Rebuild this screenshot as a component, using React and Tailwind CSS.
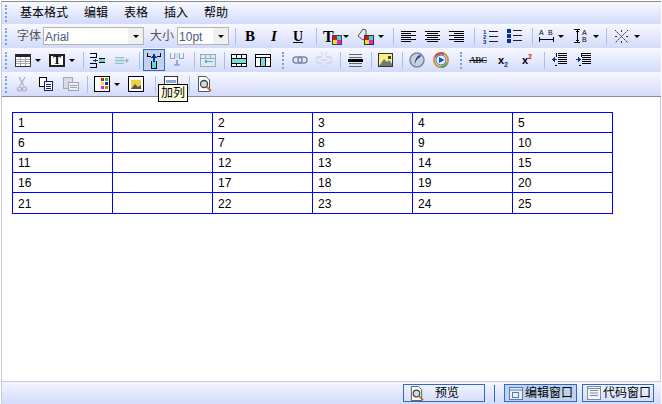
const cjk = "font-['Liberation_Sans','Noto_Sans_CJK_SC',sans-serif]";

const Svg = ({ w = 16, h = 16, children, className = "" }) => (
  <svg width={w} height={h} viewBox={`0 0 ${w} ${h}`} className={className} shapeRendering="crispEdges">
    {children}
  </svg>
);

const Arrow = () => (
  <div className="flex w-[10px] justify-center">
    <div className="h-0 w-0 border-x-[3px] border-t-[3px] border-x-transparent border-t-black" />
  </div>
);

const Sep = ({ ml = 4, mr = 4 }) => (
  <div className="h-[17px] w-[1px] bg-[#a9c0ea]" style={{ marginLeft: ml, marginRight: mr }} />
);

const Grip = () => (
  <div className="flex h-[17px] w-[2px] flex-col justify-between">
    {[0, 1, 2, 3, 4].map((i) => (
      <div key={i} className="h-[2px] w-[2px] bg-[#7f9fdc]" />
    ))}
  </div>
);

const Cell = ({ w = 24, children, className = "" }) => (
  <div className={`flex h-[22px] shrink-0 items-center justify-center ${className}`} style={{ width: w }}>
    {children}
  </div>
);

const Space = ({ w }) => <div className="shrink-0" style={{ width: w }} />;

const Lines = ({ rows, color = "#000" }) =>
  rows.map(([x, y, w], i) => <rect key={i} x={x} y={y} width={w} height="1" fill={color} />);

const Ic = {
  B: () => <span className="font-['Liberation_Serif',serif] text-[15px] font-bold text-black">B</span>,
  I: () => <span className="font-['Liberation_Serif',serif] text-[15px] font-bold italic text-black">I</span>,
  U: () => <span className="font-['Liberation_Serif',serif] text-[14px] font-bold text-black underline">U</span>,
  ColorT: () => (
    <div className="relative h-[17px] w-[19px] shrink-0">
      <span className="absolute left-0 top-[-3px] font-['Liberation_Serif',serif] text-[16px] font-bold text-black">T</span>
      <div className="absolute bottom-0 right-0 grid h-[10px] w-[10px] grid-cols-2 border border-[#444] bg-black">
        <div className="bg-[#e01010]" /><div className="bg-[#30e0e0]" /><div className="bg-[#f0e020]" /><div className="bg-[#e020e0]" />
      </div>
    </div>
  ),
  Bucket: () => (
    <Svg w={17} h={17} className="shrink-0">
      <path d="M1 8 L6 1 L9 2 L9 10 L6 12 Z" fill="#e8e8e8" stroke="#555" shapeRendering="auto" />
      <rect x="7" y="7" width="10" height="10" fill="#333" />
      <rect x="8" y="8" width="4" height="4" fill="#e01010" />
      <rect x="12" y="8" width="4" height="4" fill="#30e0e0" />
      <rect x="8" y="12" width="4" height="4" fill="#f0e020" />
      <rect x="12" y="12" width="4" height="4" fill="#e020e0" />
    </Svg>
  ),
  AlignL: () => <Svg w={15} h={11}><Lines rows={[[0,0,15],[0,2,10],[0,4,15],[0,6,10],[0,8,15],[0,10,10]]} /></Svg>,
  AlignC: () => <Svg w={15} h={11}><Lines rows={[[0,0,15],[2,2,11],[0,4,15],[2,6,11],[0,8,15],[2,10,11]]} /></Svg>,
  AlignR: () => <Svg w={15} h={11}><Lines rows={[[0,0,15],[5,2,10],[0,4,15],[5,6,10],[0,8,15],[5,10,10]]} /></Svg>,
  Ol: () => (
    <svg width="15" height="15" viewBox="0 0 15 15">
      <text x="0" y="5" fontSize="6" fontWeight="bold" fontFamily="Liberation Sans" fill="#0a2aa0">1</text>
      <text x="0" y="10" fontSize="6" fontWeight="bold" fontFamily="Liberation Sans" fill="#0a2aa0">2</text>
      <text x="0" y="15" fontSize="6" fontWeight="bold" fontFamily="Liberation Sans" fill="#0a2aa0">3</text>
      <rect x="6" y="2" width="9" height="1" fill="#222" /><rect x="6" y="7" width="9" height="1" fill="#222" /><rect x="6" y="12" width="9" height="1" fill="#222" />
    </svg>
  ),
  Ul: () => (
    <Svg w={15} h={14}>
      <rect x="0" y="0" width="4" height="4" fill="#0a2aa0" /><rect x="0" y="5" width="4" height="4" fill="#0a2aa0" /><rect x="0" y="10" width="4" height="4" fill="#0a2aa0" />
      <Lines rows={[[6,1,9],[6,6,9],[6,11,9]]} color="#222" />
    </Svg>
  ),
  AbW: () => (
    <Svg w={15} h={14} className="shrink-0">
      <text x="0" y="6" fontSize="7" fontFamily="Liberation Sans" fill="#000">A</text>
      <text x="9" y="6" fontSize="7" fontFamily="Liberation Sans" fill="#000">B</text>
      <rect x="0" y="8" width="1" height="5" fill="#000" /><rect x="14" y="8" width="1" height="5" fill="#000" />
      <rect x="1" y="10" width="13" height="1" fill="#000" />
    </Svg>
  ),
  AbH: () => (
    <Svg w={15} h={14} className="shrink-0">
      <rect x="0" y="0" width="6" height="1" fill="#000" /><rect x="0" y="13" width="6" height="1" fill="#000" />
      <rect x="3" y="1" width="1" height="12" fill="#000" /><rect x="2" y="2" width="3" height="1" fill="#000" /><rect x="2" y="11" width="3" height="1" fill="#000" />
      <text x="8" y="6" fontSize="7" fontFamily="Liberation Sans" fill="#000">A</text>
      <text x="8" y="13" fontSize="7" fontFamily="Liberation Sans" fill="#000">B</text>
    </Svg>
  ),
  Star: () => (
    <svg width="15" height="15" viewBox="0 0 15 15" stroke="#333" strokeDasharray="2 1" className="shrink-0">
      <path d="M1 1 L14 14 M14 1 L1 14" /><path d="M7.5 1 V3 M7.5 12 V14 M1 7.5 H3 M12 7.5 H14" />
    </svg>
  ),
  Grid: () => (
    <Svg w={16} h={13} className="shrink-0">
      <rect x="0" y="0" width="16" height="13" fill="#fff" />
      <rect x="0" y="0" width="16" height="3" fill="#223" />
      {[5, 7, 9].map((y) => <rect key={y} x="0" y={y} width="16" height="1" fill="#aaa" />)}
      {[5, 10].map((x) => <rect key={x} x={x} y="3" width="1" height="10" fill="#aaa" />)}
      <rect x="0" y="12" width="16" height="1" fill="#333" /><rect x="0" y="0" width="1" height="13" fill="#333" /><rect x="15" y="0" width="1" height="13" fill="#333" />
    </Svg>
  ),
  TextBox: () => (
    <div className="flex h-[13px] w-[16px] shrink-0 items-center justify-center border-2 border-[#222] bg-white font-['Liberation_Serif',serif] text-[12px] font-bold leading-none text-black">T</div>
  ),
  SplitL: () => (
    <Svg w={15} h={15} className="shrink-0">
      <Lines rows={[[0,0,6],[0,4,6],[0,10,6],[0,14,6]]} />
      <rect x="6" y="0" width="1" height="5" fill="#000" /><rect x="6" y="10" width="1" height="5" fill="#000" />
      <rect x="3" y="7" width="5" height="1" fill="#1030a0" /><rect x="5" y="6" width="1" height="3" fill="#1030a0" />
      <rect x="9" y="5" width="6" height="5" fill="#66d8d8" /><rect x="9" y="5" width="6" height="1" fill="#000" /><rect x="9" y="9" width="6" height="1" fill="#000" />
    </Svg>
  ),
  SplitR: () => (
    <Svg w={15} h={15} className="shrink-0">
      <rect x="0" y="4" width="9" height="7" fill="#bfe8ec" />
      <Lines rows={[[0,4,9],[0,7,11],[0,10,9]]} color="#a8b4c8" />
      <rect x="11" y="5" width="1" height="5" fill="#a8b4d8" /><rect x="12" y="6" width="1" height="3" fill="#a8b4d8" /><rect x="13" y="7" width="1" height="1" fill="#a8b4d8" />
    </Svg>
  ),
  ColAdd: () => (
    <Svg w={14} h={17}>
      <rect x="0" y="1" width="1" height="4" fill="#000" /><rect x="0" y="4" width="4" height="1" fill="#000" />
      <rect x="13" y="1" width="1" height="4" fill="#000" /><rect x="10" y="4" width="4" height="1" fill="#000" />
      <rect x="5" y="9" width="4" height="8" fill="#60d8d8" /><rect x="4" y="9" width="1" height="8" fill="#000" /><rect x="9" y="9" width="1" height="8" fill="#000" /><rect x="4" y="16" width="6" height="1" fill="#000" />
      <rect x="6" y="2" width="2" height="8" fill="#1030a0" /><rect x="5" y="4" width="4" height="1" fill="#1030a0" /><rect x="4" y="5" width="6" height="1" fill="#1030a0" />
    </Svg>
  ),
  ColDel: () => (
    <Svg w={14} h={17}>
      <rect x="0" y="1" width="1" height="6" fill="#99a8b8" /><rect x="0" y="6" width="5" height="1" fill="#99a8b8" /><rect x="4" y="1" width="1" height="6" fill="#99a8b8" />
      <rect x="9" y="1" width="1" height="6" fill="#99a8b8" /><rect x="9" y="6" width="5" height="1" fill="#99a8b8" /><rect x="13" y="1" width="1" height="6" fill="#99a8b8" />
      <rect x="5" y="1" width="4" height="5" fill="#bfe8ec" />
      <rect x="6" y="8" width="2" height="6" fill="#9aa8d8" /><rect x="4" y="12" width="6" height="1" fill="#9aa8d8" /><rect x="5" y="13" width="4" height="1" fill="#9aa8d8" />
    </Svg>
  ),
  Merge: () => (
    <Svg w={16} h={13}>
      <rect x="0" y="0" width="16" height="13" fill="#d8eef0" />
      <rect x="0" y="0" width="16" height="1" fill="#9ab" /><rect x="0" y="12" width="16" height="1" fill="#9ab" /><rect x="0" y="0" width="1" height="13" fill="#9ab" /><rect x="15" y="0" width="1" height="13" fill="#9ab" />
      <rect x="1" y="4" width="14" height="1" fill="#9ab" /><rect x="5" y="0" width="1" height="4" fill="#9ab" /><rect x="10" y="0" width="1" height="4" fill="#9ab" />
      <rect x="6" y="7" width="7" height="1" fill="#7a9ad8" /><rect x="5" y="6" width="2" height="3" fill="#7a9ad8" />
    </Svg>
  ),
  RowT: () => (
    <Svg w={16} h={13}>
      <rect width="16" height="13" fill="#000" /><rect x="1" y="1" width="14" height="3" fill="#fff" />
      <rect x="1" y="5" width="14" height="4" fill="#70e0e0" /><rect x="1" y="10" width="14" height="2" fill="#fff" />
      <rect x="5" y="0" width="1" height="5" fill="#000" /><rect x="10" y="0" width="1" height="5" fill="#000" />
      <rect x="5" y="9" width="1" height="4" fill="#000" /><rect x="10" y="9" width="1" height="4" fill="#000" />
    </Svg>
  ),
  ColT: () => (
    <Svg w={16} h={13}>
      <rect width="16" height="13" fill="#000" /><rect x="1" y="1" width="14" height="2" fill="#fff" />
      <rect x="1" y="4" width="4" height="8" fill="#fff" /><rect x="6" y="4" width="4" height="8" fill="#70e0e0" /><rect x="11" y="4" width="4" height="8" fill="#fff" />
    </Svg>
  ),
  Link: () => (
    <svg width="16" height="8" viewBox="0 0 16 8" fill="none" stroke="#7c8ca8" strokeWidth="1.5">
      <rect x="1" y="1" width="9" height="6" rx="3" /><rect x="6" y="1" width="9" height="6" rx="3" />
    </svg>
  ),
  Unlink: () => (
    <svg width="16" height="16" viewBox="0 0 16 16" fill="none" stroke="#d0d4dc" strokeWidth="1.6">
      <path d="M6 5 H3 a2.5 2.5 0 0 0 0 6 H6 M10 5 H13 a2.5 2.5 0 0 1 0 6 H10 M5 8 H11" />
      <path d="M5 0 L7 3 M11 0 L9 3 M5 16 L7 13 M11 16 L9 13" strokeWidth="1" />
    </svg>
  ),
  Hr: () => <Svg w={15} h={13}><Lines rows={[[1,0,13],[1,3,13],[1,9,13],[1,12,13]]} color="#666" /><rect x="0" y="5" width="15" height="3" fill="#000" /></Svg>,
  Image: () => (
    <Svg w={15} h={14}>
      <rect width="15" height="14" fill="#333" /><rect x="1" y="1" width="13" height="12" fill="#f6f080" />
      <rect x="10" y="3" width="3" height="3" fill="#444" />
      <path d="M1 13 L6 6 L9 9 L11 7 L14 11 V13 Z" fill="#777" shapeRendering="auto" />
    </Svg>
  ),
  Flash: () => (
    <svg width="16" height="16" viewBox="0 0 16 16">
      <circle cx="8" cy="8" r="7" fill="#c8d0dc" stroke="#7c8898" strokeWidth="1.5" />
      <path d="M11.5 2.5 Q5.5 5 5.5 13 Q7 7 11.5 5 Z" fill="#24408c" />
    </svg>
  ),
  Media: () => (
    <svg width="16" height="16" viewBox="0 0 16 16">
      <circle cx="8" cy="8" r="7" fill="#fff" stroke="#d89030" strokeWidth="2" />
      <path d="M2 5 A7 7 0 0 1 11 2" stroke="#d04040" strokeWidth="2" fill="none" />
      <path d="M14 11 A7 7 0 0 1 8 15" stroke="#50a040" strokeWidth="2" fill="none" />
      <circle cx="8" cy="8" r="5" fill="#e8f0ff" stroke="#2070d8" />
      <path d="M6 5 L11.5 8 L6 11 Z" fill="#1850b8" />
    </svg>
  ),
  Abc: () => (
    <div className="relative font-['Liberation_Serif',serif] text-[9px] font-bold leading-none tracking-tighter text-[#333]">
      ABC
      <div className="absolute left-0 right-0 top-[4px] h-[1px] bg-black" />
    </div>
  ),
  Sub: () => <div className="font-['Liberation_Sans',sans-serif] text-[11px] font-bold leading-none text-black">x<span className="relative top-[3px] text-[7px] text-[#1030a0]">2</span></div>,
  Sup: () => <div className="font-['Liberation_Sans',sans-serif] text-[11px] font-bold leading-none text-black">x<span className="relative top-[-5px] text-[7px] text-[#c01010]">2</span></div>,
  Outdent: () => (
    <Svg w={15} h={14}>
      <rect x="0" y="6" width="5" height="1" fill="#1030a0" /><rect x="1" y="5" width="1" height="3" fill="#1030a0" /><rect x="2" y="4" width="1" height="5" fill="#1030a0" />
      <Lines rows={[[6,0,9],[6,2,9],[6,4,9],[6,6,9],[6,8,9],[6,10,9]]} /><Lines rows={[[3,12,2]]} />
      <rect x="4" y="0" width="1" height="4" fill="#000" />
    </Svg>
  ),
  Indent: () => (
    <Svg w={15} h={14}>
      <rect x="0" y="6" width="5" height="1" fill="#1030a0" /><rect x="3" y="5" width="1" height="3" fill="#1030a0" /><rect x="2" y="4" width="1" height="5" fill="#1030a0" />
      <Lines rows={[[6,0,9],[6,2,9],[6,4,9],[6,6,9],[6,8,9],[6,10,9]]} /><Lines rows={[[3,12,2]]} />
      <rect x="5" y="0" width="1" height="4" fill="#000" />
    </Svg>
  ),
  Cut: () => (
    <svg width="10" height="15" viewBox="0 0 10 15" fill="none" stroke="#a8acb8" strokeWidth="1.1">
      <path d="M2 0 L7 9 M8 0 L3 9" /><circle cx="2.5" cy="12" r="2" /><circle cx="7.5" cy="12" r="2" />
    </svg>
  ),
  Copy: () => (
    <Svg w={14} h={14}>
      <rect x="0" y="0" width="8" height="10" fill="#000" /><rect x="1" y="1" width="6" height="8" fill="#fff" />
      <rect x="5" y="4" width="9" height="10" fill="#102070" /><rect x="6" y="5" width="7" height="8" fill="#fff" />
      <Lines rows={[[7,7,5],[7,9,5],[7,11,5]]} color="#102070" />
    </Svg>
  ),
  Paste: () => (
    <Svg w={16} h={14}>
      <rect x="0" y="0" width="10" height="12" fill="#a8a8b0" /><rect x="1" y="1" width="8" height="10" fill="#dcdce0" />
      <rect x="5" y="5" width="11" height="9" fill="#9ca4b8" /><rect x="6" y="6" width="9" height="7" fill="#f0f0f4" />
      <Lines rows={[[7,8,7],[7,10,7]]} color="#9ca4b8" />
    </Svg>
  ),
  Tpl: () => (
    <Svg w={16} h={16} className="shrink-0">
      <rect width="16" height="16" fill="#000" /><rect x="1" y="1" width="14" height="14" fill="#fff" />
      <rect x="7" y="2" width="3" height="3" fill="#e01010" /><rect x="11" y="2" width="3" height="3" fill="#20c020" />
      <rect x="7" y="6" width="3" height="3" fill="#f0e020" /><rect x="11" y="6" width="3" height="3" fill="#1030c0" />
      <rect x="7" y="10" width="3" height="3" fill="#e020e0" /><rect x="11" y="10" width="3" height="3" fill="#e07010" />
    </Svg>
  ),
  Pic: () => (
    <Svg w={16} h={16} className="shrink-0">
      <rect width="16" height="16" fill="#000" /><rect x="1" y="1" width="14" height="14" fill="#fff" />
      <rect x="3" y="4" width="10" height="9" fill="#f0d040" /><path d="M3 13 L7 8 L10 11 L13 9 V13 Z" fill="#555" shapeRendering="auto" />
    </Svg>
  ),
  Print: () => (
    <Svg w={16} h={16} className="shrink-0">
      <rect x="1" y="0" width="14" height="16" fill="#333" /><rect x="2" y="1" width="12" height="14" fill="#fff" />
      <rect x="3" y="4" width="10" height="3" fill="#88a8d8" />
    </Svg>
  ),
  Preview: ({ size = 16 }) => (
    <svg width={size} height={size} viewBox="0 0 16 16" fill="none" className="shrink-0">
      <path d="M2.5 .5 H10 L13.5 4 V15.5 H2.5 Z" fill="#fff" stroke="#555" />
      <circle cx="8" cy="8" r="3.5" fill="#c8e0ec" stroke="#444" strokeWidth="1.3" />
      <path d="M10.5 10.5 L15 15" stroke="#c07020" strokeWidth="2" />
    </svg>
  ),
};

const Row = ({ children, className = "h-[24px]" }) => (
  <div className={`flex items-center bg-gradient-to-b from-[#f8f9ff] to-[#d2dbfa] pl-[3px] ${className}`}>
    {children}
  </div>
);

const Select = ({ value, w }) => (
  <div className="flex h-[18px] shrink-0 items-stretch border border-[#b4b4ac] bg-white" style={{ width: w }}>
    <div className="flex-1 pl-[1px] text-[12px] leading-[19px] text-[#4a5a80]">{value}</div>
    <div className="flex w-[15px] items-center justify-center bg-[#f0f0f0]">
      <div className="h-0 w-0 border-x-[3px] border-t-[3px] border-x-transparent border-t-black" />
    </div>
  </div>
);

const rows = [
  ["1", "", "2", "3", "4", "5"],
  ["6", "", "7", "8", "9", "10"],
  ["11", "", "12", "13", "14", "15"],
  ["16", "", "17", "18", "19", "20"],
  ["21", "", "22", "23", "24", "25"],
];

const StatusBtn = ({ w, active, children }) => (
  <div
    className={`flex h-[18px] shrink-0 items-center border border-[#316ac5] text-[12px] text-black ${active ? "bg-[#c1d2ee]" : ""}`}
    style={{ width: w }}
  >
    {children}
  </div>
);

export default function App() {
  return (
    <div className={`relative flex h-[404px] w-[662px] flex-col bg-white pl-[1px] pt-[1px] ${cjk}`}>
      <div className="flex h-[403px] w-[660px] flex-col border-l border-[#c8c8d0]">
        <div className="border-y border-[#8c8c8c]">
          <Row className="h-[22px]">
            <Grip />
            <div className="ml-[13px] flex gap-[16px] text-[12px] text-black">
              {["基本格式", "编辑", "表格", "插入", "帮助"].map((m) => (
                <span key={m}>{m}</span>
              ))}
            </div>
          </Row>
          <Row>
            <Grip />
            <span className="ml-[10px] mr-[2px] text-[12px] text-[#555]">字体</span>
            <Select value="Arial" w={101} />
            <span className="ml-[6px] mr-[3px] text-[12px] text-[#555]">大小</span>
            <Select value="10pt" w={52} />
            <Sep ml={6} mr={2} />
            <Cell><Ic.B /></Cell>
            <Cell><Ic.I /></Cell>
            <Cell><Ic.U /></Cell>
            <Sep ml={6} mr={6} />
            <Ic.ColorT />
            <Cell w={8} className="mr-[7px]"><Arrow /></Cell>
            <Ic.Bucket />
            <Cell w={13}><Arrow /></Cell>
            <Sep ml={6} mr={2} />
            <Cell><Ic.AlignL /></Cell>
            <Cell><Ic.AlignC /></Cell>
            <Cell><Ic.AlignR /></Cell>
            <Sep ml={6} mr={3} />
            <Cell><Ic.Ol /></Cell>
            <Cell><Ic.Ul /></Cell>
            <Sep ml={6} mr={6} />
            <Ic.AbW />
            <Cell w={14}><Arrow /></Cell>
            <Space w={6} />
            <Ic.AbH />
            <Cell w={14}><Arrow /></Cell>
            <Sep ml={3} mr={7} />
            <Ic.Star />
            <Cell w={16}><Arrow /></Cell>
          </Row>
          <Row>
            <Grip />
            <Space w={8} />
            <Ic.Grid />
            <Cell w={14}><Arrow /></Cell>
            <Space w={4} />
            <Ic.TextBox />
            <Cell w={14}><Arrow /></Cell>
            <Sep ml={4} mr={6} />
            <Ic.SplitL />
            <Space w={10} />
            <Ic.SplitR />
            <Sep ml={9} mr={3} />
            <Cell w={22} className="border border-[#316ac5] bg-[#c1d2ee]"><Ic.ColAdd /></Cell>
            <Cell><Ic.ColDel /></Cell>
            <Sep ml={5} mr={1} />
            <Cell><Ic.Merge /></Cell>
            <Sep ml={4} mr={2} />
            <Cell><Ic.RowT /></Cell>
            <Cell><Ic.ColT /></Cell>
            <Space w={7} />
            <Grip />
            <Space w={6} />
            <Cell w={20}><Ic.Link /></Cell>
            <Cell w={28}><Ic.Unlink /></Cell>
            <Sep ml={2} mr={3} />
            <Cell w={22}><Ic.Hr /></Cell>
            <Sep ml={5} mr={1} />
            <Cell><Ic.Image /></Cell>
            <Sep ml={5} mr={2} />
            <Cell><Ic.Flash /></Cell>
            <Cell><Ic.Media /></Cell>
            <Space w={7} />
            <Grip />
            <Space w={3} />
            <Cell w={26}><Ic.Abc /></Cell>
            <Cell><Ic.Sub /></Cell>
            <Cell><Ic.Sup /></Cell>
            <Sep ml={5} mr={4} />
            <Cell w={20}><Ic.Outdent /></Cell>
            <Cell w={28}><Ic.Indent /></Cell>
          </Row>
          <Row>
            <Grip />
            <Cell w={28} className="ml-[1px]"><Ic.Cut /></Cell>
            <Cell w={20}><Ic.Copy /></Cell>
            <Cell w={30}><Ic.Paste /></Cell>
            <Sep ml={1} mr={6} />
            <Ic.Tpl />
            <Cell w={14}><Arrow /></Cell>
            <Space w={4} />
            <Ic.Pic />
            <Sep ml={11} mr={7} />
            <Ic.Print />
            <Sep ml={10} mr={6} />
            <Ic.Preview />
          </Row>
        </div>
        <div className="flex-1 border-r border-[#c8c8d0] px-[10px] pt-[15px]">
          <table className="w-[601px] table-fixed border-collapse border border-[#0000ff] font-['Liberation_Sans',sans-serif] text-[12px] text-black">
            <tbody>
              {rows.map((r, i) => (
                <tr key={i} className={i === 4 ? "h-[21px]" : "h-[20px]"}>
                  {r.map((c, j) => (
                    <td key={j} className="border border-[#0000ff] p-0 pl-[5px] pt-[2px] align-middle leading-[17px]">
                      {c}
                    </td>
                  ))}
                </tr>
              ))}
            </tbody>
          </table>
        </div>
        <div className="flex h-[23px] items-center border-t border-[#c8c8d0] bg-gradient-to-b from-[#f4f6ff] to-[#d2dbfa]">
          <Space w={401} />
          <StatusBtn w={82}>
            <div className="ml-[5px]"><Ic.Preview size={15} /></div>
            <span className="ml-[11px]">预览</span>
          </StatusBtn>
          <div className="ml-[9px] mr-[9px] h-[17px] w-[1px] bg-[#316ac5]" />
          <StatusBtn w={73} active>
            <svg width="14" height="13" viewBox="0 0 14 13" className="ml-[4px] shrink-0" fill="none" stroke="#5a7ab0">
              <rect x=".5" y=".5" width="13" height="12" fill="#e8f0fc" /><path d="M.5 3 H13.5" /><rect x="3.5" y="5.5" width="6" height="5" />
            </svg>
            <span className="ml-[2px] whitespace-nowrap">编辑窗口</span>
          </StatusBtn>
          <Space w={5} />
          <StatusBtn w={72}>
            <svg width="14" height="14" viewBox="0 0 14 14" className="ml-[4px] shrink-0" fill="none" stroke="#7c8ca8">
              <rect x=".5" y=".5" width="13" height="13" fill="#f0f4fc" /><path d="M3 4.5 H11 M3 7 H11 M3 9.5 H11" /><path d="M.5 2.5 H13.5" />
            </svg>
            <span className="ml-[2px] whitespace-nowrap">代码窗口</span>
          </StatusBtn>
        </div>
      </div>
      <div className="absolute left-[158px] top-[84px] flex h-[18px] w-[30px] items-center justify-center border border-black bg-[#ffffe1] text-[12px] text-black">
        加列
      </div>
    </div>
  );
}
